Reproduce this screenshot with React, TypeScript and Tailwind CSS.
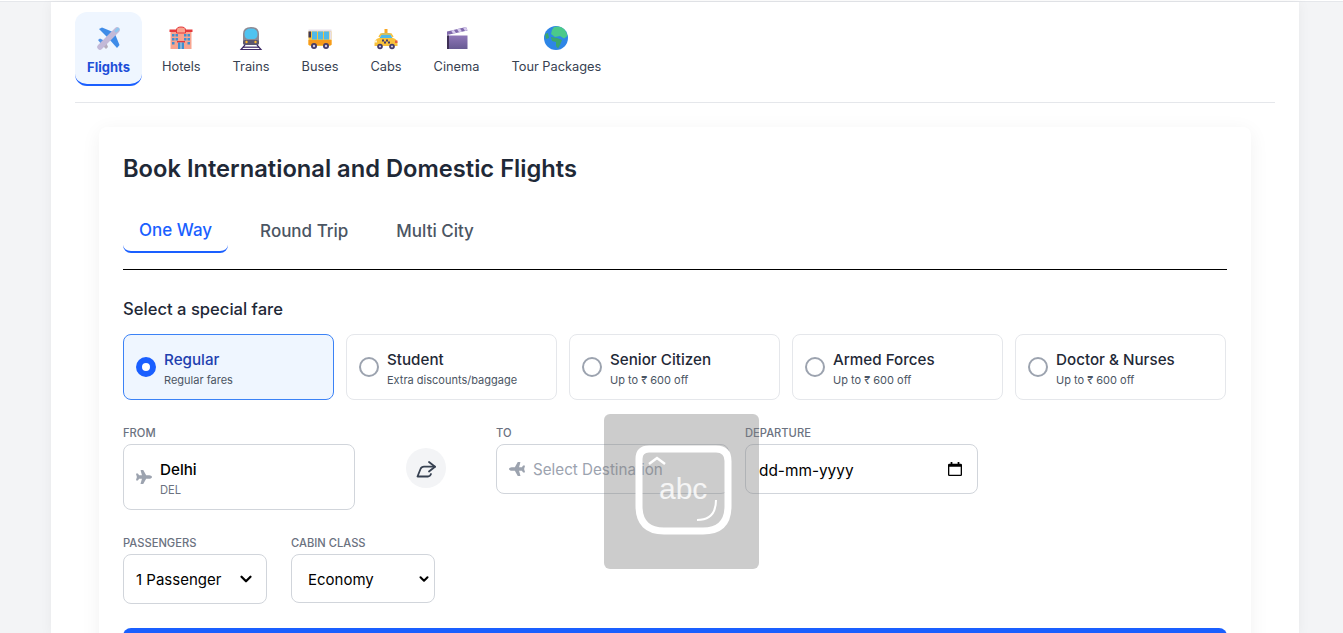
import { useState } from 'react';
import { ChevronDown } from 'lucide-react';
import { FaPlane } from 'react-icons/fa';

function PlaneEmoji() {
  return (
    <svg viewBox="0 0 24 24" className="w-6 h-6">
      <path d="M2 3 L5 1.5 L16 6 L11 12 Z" fill="#3f8ce8" />
      <path d="M18 8 L22.5 19 L20 22 L12 13 Z" fill="#3f8ce8" />
      <path d="M1 14 L3 12.5 L8 15 L5 19 Z" fill="#5092e8" />
      <path d="M5 19 L9 16 L11 21 L9 23 Z" fill="#b4acbc" />
      <path d="M3 21 L20 4" stroke="#c3b9d8" strokeWidth="5.5" strokeLinecap="round" />
      <path d="M19 5 L21 3" stroke="#8fc6ee" strokeWidth="3" strokeLinecap="round" />
    </svg>
  );
}

function HotelEmoji() {
  return (
    <svg viewBox="0 0 24 24" className="w-6 h-6">
      <rect x="1.5" y="5" width="21" height="18" fill="#f8a48f" />
      <rect x="0.5" y="3.5" width="23" height="2.5" fill="#e5383b" />
      <path d="M7.5 4 Q7.5 1 12 1 Q16.5 1 16.5 4 V7 H7.5 Z" fill="#f8a48f" stroke="#e5383b" strokeWidth="1" />
      <rect x="3" y="8" width="2.5" height="2.5" fill="#3f8fd0" />
      <rect x="6.5" y="8" width="2.5" height="2.5" fill="#3f8fd0" />
      <rect x="15" y="8" width="2.5" height="2.5" fill="#3f8fd0" />
      <rect x="18.5" y="8" width="2.5" height="2.5" fill="#3f8fd0" />
      <rect x="3" y="12" width="2.5" height="2.5" fill="#3f8fd0" />
      <rect x="6.5" y="12" width="2.5" height="2.5" fill="#3f8fd0" />
      <rect x="15" y="12" width="2.5" height="2.5" fill="#3f8fd0" />
      <rect x="18.5" y="12" width="2.5" height="2.5" fill="#3f8fd0" />
      <rect x="3" y="16" width="2.5" height="2.5" fill="#3f8fd0" />
      <rect x="18.5" y="16" width="2.5" height="2.5" fill="#3f8fd0" />
      <rect x="8" y="15" width="8" height="1.5" fill="#e5383b" />
      <rect x="9" y="16.5" width="6" height="6.5" fill="#3f8fd0" />
      <rect x="11.6" y="16.5" width="0.8" height="6.5" fill="#f3e9e0" />
    </svg>
  );
}

function TrainEmoji() {
  return (
    <svg viewBox="0 0 24 24" className="w-6 h-6">
      <path d="M4 8 Q4 1 12 1 Q20 1 20 8 V16 Q20 19 17 19 H7 Q4 19 4 16 Z" fill="#8d8a94" />
      <path d="M5.5 8 Q5.5 2.5 12 2.5 Q18.5 2.5 18.5 8 Q18.5 12.5 15 13 H9 Q5.5 12.5 5.5 8 Z" fill="#4fc3f0" />
      <rect x="4" y="14" width="16" height="5" rx="2" fill="#5b5670" />
      <circle cx="7.5" cy="16" r="1.2" fill="#fbb82d" />
      <circle cx="16.5" cy="16" r="1.2" fill="#fbb82d" />
      <path d="M6 19 L2 23.5 H22 L18 19" fill="none" stroke="#3e2a66" strokeWidth="1.2" />
      <path d="M4 21.2 H20" stroke="#3e2a66" strokeWidth="1.2" />
    </svg>
  );
}

function BusEmoji() {
  return (
    <svg viewBox="0 0 24 24" className="w-6 h-6">
      <rect x="0.5" y="4" width="23" height="16" rx="2" fill="#f9c23c" />
      <rect x="0.5" y="14" width="23" height="5" fill="#f79a1c" />
      <rect x="0.5" y="3.5" width="23" height="2" fill="#e5dfec" />
      <rect x="0.5" y="5.5" width="2.5" height="6" fill="#3e3759" />
      <rect x="4" y="5.5" width="5" height="8" fill="#4fb9ea" />
      <rect x="10" y="5.5" width="5" height="8" fill="#4fb9ea" />
      <rect x="16" y="5.5" width="5" height="8" fill="#4fb9ea" />
      <rect x="21.5" y="5.5" width="2" height="8" fill="#e5dfec" />
      <circle cx="6" cy="20" r="3" fill="#433b6b" />
      <circle cx="6" cy="20" r="1.2" fill="#d3c9e0" />
      <circle cx="18" cy="20" r="3" fill="#433b6b" />
      <circle cx="18" cy="20" r="1.2" fill="#d3c9e0" />
    </svg>
  );
}

function TaxiEmoji() {
  return (
    <svg viewBox="0 0 24 24" className="w-6 h-6">
      <rect x="10.5" y="3" width="3" height="4" fill="#f9a825" />
      <path d="M5 14 L7 8.5 Q7.5 7 9 7 H15 Q16.5 7 17 8.5 L19 14 Z" fill="#4fb9ea" />
      <path d="M5 11 L7 8 H17 L19 11" fill="none" stroke="#f9c23c" strokeWidth="1.5" />
      <path d="M0.5 18 Q0.5 13 5 12 H19 Q23.5 13 23.5 18 V20 H0.5 Z" fill="#f9c23c" />
      <rect x="0.5" y="14.5" width="2.5" height="2" fill="#fff3d0" />
      <rect x="21" y="14.5" width="2.5" height="2.5" fill="#e8603c" />
      <path d="M8 13.5 h2 v2 h-2 Z M12 13.5 h2 v2 h-2 Z M10 15.5 h2 v2 h-2 Z M14 15.5 h2 v2 h-2 Z" fill="#433b6b" />
      <circle cx="6" cy="20.5" r="2.8" fill="#433b6b" />
      <circle cx="6" cy="20.5" r="1.1" fill="#d3c9e0" />
      <circle cx="18" cy="20.5" r="2.8" fill="#433b6b" />
      <circle cx="18" cy="20.5" r="1.1" fill="#d3c9e0" />
    </svg>
  );
}

function ClapperEmoji() {
  return (
    <svg viewBox="0 0 24 24" className="w-6 h-6">
      <defs>
        <linearGradient id="clapper-body" x1="0" y1="0" x2="0" y2="1">
          <stop offset="0" stopColor="#8f77b8" />
          <stop offset="1" stopColor="#675a92" />
        </linearGradient>
      </defs>
      <rect x="2" y="9.5" width="20.5" height="13.5" fill="url(#clapper-body)" />
      <rect x="2" y="9.5" width="2" height="13.5" fill="#3e2f55" />
      <path d="M2 5.5 L21 1 L22.5 4.5 L2 9 Z" fill="#7f68ab" />
      <path d="M6 4.6 L9 3.9 L11 7 L8 7.6 Z M12 3.2 L15 2.5 L17 5.6 L14 6.3 Z M18 1.8 L21 1 L22.5 4.3 L20 4.9 Z" fill="#d5c9ec" />
    </svg>
  );
}

function GlobeEmoji() {
  return (
    <svg viewBox="0 0 24 24" className="w-6 h-6">
      <circle cx="12" cy="12" r="12" fill="#2e86e6" />
      <path d="M10 1 Q16 -0.5 20 3 Q23 6 23.5 10 L20 12.5 L16 10 L11 11 L7 8 L8 4 Z" fill="#4bc98a" />
      <path d="M7 11 L13 12 L18 14 L16 19 L14 22.5 L12 20 L12 16 L8 15 Z" fill="#3aa76d" />
      <path d="M1 8 L4 7 L5 12 L2 13 Z" fill="#3aa76d" />
    </svg>
  );
}

const NAV_ITEMS = [
  { label: 'Flights', Icon: PlaneEmoji },
  { label: 'Hotels', Icon: HotelEmoji },
  { label: 'Trains', Icon: TrainEmoji },
  { label: 'Buses', Icon: BusEmoji },
  { label: 'Cabs', Icon: TaxiEmoji },
  { label: 'Cinema', Icon: ClapperEmoji },
  { label: 'Tour Packages', Icon: GlobeEmoji },
];

const FARES = [
  { title: 'Regular', sub: 'Regular fares' },
  { title: 'Student', sub: 'Extra discounts/baggage' },
  { title: 'Senior Citizen', sub: 'Up to ₹ 600 off' },
  { title: 'Armed Forces', sub: 'Up to ₹ 600 off' },
  { title: 'Doctor & Nurses', sub: 'Up to ₹ 600 off' },
];

function FieldLabel({ children }: { children: string }) {
  return <div className="text-[11.2px] font-medium leading-4 text-[#6b7280] uppercase mb-[3px]">{children}</div>;
}

export default function App() {
  const [activeFare, setActiveFare] = useState(0);
  const [tab, setTab] = useState('One Way');

  return (
    <div className="h-[633px] overflow-hidden bg-[#f3f4f6] font-['Inter',sans-serif] relative">
      <div className="h-[2px] bg-white border-b border-[#e5e7eb]" />
      <div className="w-[1248px] ml-[51px] bg-white h-full pt-[10px] px-6 shadow-[0_0_12px_rgba(0,0,0,0.05)]">
        {/* Category nav */}
        <div className="flex items-start gap-2 h-[91px] border-b border-[#e5e7eb]">
          {NAV_ITEMS.map(({ label, Icon }, i) => (
            <button
              key={label}
              className={`h-[74px] flex flex-col items-center px-3 pt-[14px] rounded-xl ${
                i === 0 ? 'w-[67px] bg-[#eff6ff] border-b-2 border-[#1a5fff]' : ''
              }`}
            >
              <Icon />
              <span
                className={`leading-5 mt-[7px] whitespace-nowrap ${
                  i === 0 ? 'text-[13px] font-bold text-[#1d4ed8]' : 'text-[12.8px] text-[#374151]'
                }`}
              >
                {label}
              </span>
            </button>
          ))}
        </div>

        {/* Booking card */}
        <div className="mx-6 mt-6 bg-white rounded-lg shadow-[0_4px_20px_rgba(0,0,0,0.06)] p-6 h-[600px]">
          <h1 className="text-[23.7px] leading-8 font-semibold text-[#1f2937] mt-[2px]">
            Book International and Domestic Flights
          </h1>

          <div className="flex gap-4 mt-[20px] border-b border-black h-[65px]">
            {['One Way', 'Round Trip', 'Multi City'].map((t) => (
              <button
                key={t}
                onClick={() => setTab(t)}
                className={`px-4 pt-[6px] h-[48px] text-[17px] font-medium rounded-lg ${
                  tab === t ? 'text-[#1a5fff] border-b-2 border-[#1a5fff]' : 'text-[#4b5563]'
                }`}
              >
                {t}
              </button>
            ))}
          </div>

          <h2 className="text-[16.6px] leading-7 font-medium text-[#1f2937] mt-[25px]">Select a special fare</h2>

          <div className="flex gap-3 mt-[11px]">
            {FARES.map((fare, i) => (
              <button
                key={fare.title}
                onClick={() => setActiveFare(i)}
                className={`w-[211px] h-[66px] flex items-center gap-2 px-3 text-left rounded-lg border ${
                  activeFare === i ? 'bg-[#eff6ff] border-[#3b82f6]' : 'bg-white border-[#e5e7eb]'
                }`}
              >
                <span
                  className={`w-5 h-5 rounded-full shrink-0 bg-white ${
                    activeFare === i ? 'border-[6px] border-[#1a5fff]' : 'border-2 border-[#9ca3af]'
                  }`}
                />
                <span className="block">
                  <span className={`block pt-[2px] text-[15.2px] leading-6 font-medium ${activeFare === i ? 'text-[#1e40af]' : 'text-[#1f2937]'}`}>
                    {fare.title}
                  </span>
                  <span className="block text-[11px] leading-4 text-[#4b5563]">{fare.sub}</span>
                </span>
              </button>
            ))}
          </div>

          {/* Route fields */}
          <div className="flex items-start mt-[25px]">
            <div className="w-[232px]">
              <FieldLabel>From</FieldLabel>
              <div className="h-[66px] rounded-lg border border-[#d1d5db] flex items-center pl-3 gap-[8px]">
                <FaPlane className="w-4 h-4 text-[#9ca3af]" />
                <div>
                  <div className="pt-[2px] text-[15.2px] leading-6 font-medium text-black">Delhi</div>
                  <div className="text-[11.2px] leading-4 text-[#6b7280]">DEL</div>
                </div>
              </div>
            </div>
            <div className="w-[141px] flex justify-center pt-[23px]">
              <button className="w-10 h-10 rounded-full bg-[#f3f4f6] flex items-center justify-center">
                <svg viewBox="0 0 24 24" className="w-6 h-6 stroke-[#374151] fill-none" strokeWidth="1.8" strokeLinecap="round" strokeLinejoin="round">
                  <path d="M15 6 L21 10.7 L15 15.5" />
                  <path d="M21 10.7 H10 Q7.5 10.7 6.5 13 L3.5 20.5 H14 Q16 20.5 17 18" />
                </svg>
              </button>
            </div>
            <div className="w-[233px] mr-4">
              <FieldLabel>To</FieldLabel>
              <div className="h-[50px] rounded-lg border border-[#d1d5db] flex items-center pl-3 gap-[8px]">
                <FaPlane className="w-4 h-4 text-[#9ca3af] rotate-180" />
                <span className="pt-[2px] text-[15.2px] text-[#9ca3af]">Select Destination</span>
              </div>
            </div>
            <div className="w-[233px]">
              <FieldLabel>Departure</FieldLabel>
              <div className="h-[50px] rounded-lg border border-[#d1d5db] flex items-center justify-between pl-[13px] pr-[15px]">
                <span className="pt-[3px] text-[15.4px] text-black">dd-mm-yyyy</span>
                <svg viewBox="0 0 16 16" className="w-[14px] h-[14px] fill-black">
                  <path d="M3 0h2v2h6V0h2v2h1.5A1.5 1.5 0 0 1 16 3.5v11a1.5 1.5 0 0 1-1.5 1.5h-13A1.5 1.5 0 0 1 0 14.5v-11A1.5 1.5 0 0 1 1.5 2H3V0Zm-1.5 5.5v9h13v-9h-13Z" />
                </svg>
              </div>
            </div>
          </div>

          {/* Passengers and cabin */}
          <div className="flex gap-6 mt-[25px]">
            <div className="w-36">
              <FieldLabel>Passengers</FieldLabel>
              <div className="h-[50px] rounded-lg border border-[#d1d5db] flex items-center justify-between pl-3 pr-[11px] text-[15px] text-black">
                <span className="pt-[2px]">1 Passenger</span>
                <ChevronDown className="w-[18px] h-[18px]" strokeWidth={3} />
              </div>
            </div>
            <div className="w-36">
              <FieldLabel>Cabin Class</FieldLabel>
              <div className="h-[49px] rounded-lg border border-[#d1d5db] flex items-center justify-between pl-4 pr-[3px] text-[15px] text-black">
                <span className="pt-[3px]">Economy</span>
                <ChevronDown className="w-[14px] h-[14px]" strokeWidth={3.5} />
              </div>
            </div>
          </div>

          <div className="mt-[24px] h-12 rounded-lg bg-[#1a5fff]" />
        </div>
      </div>

      {/* Handwriting input overlay */}
      <div className="absolute left-[604px] top-[414px] w-[155px] h-[155px] rounded-md bg-[#808080]/40">
        <svg viewBox="0 0 155 155" className="w-[155px] h-[155px]">
          <path
            d="M45 35 H112 Q124 35 124 47 V92 Q124 117 99 117 H60 Q35 117 35 92 V45 Q35 35 45 35 Z"
            fill="none"
            stroke="#fff"
            strokeWidth="7"
          />
          <path d="M45 50 L53 44 L61 50" fill="none" stroke="#fff" strokeWidth="2.5" />
          <path d="M93 106 Q112 106 112 86" fill="none" stroke="#fff" strokeWidth="2" />
        </svg>
        <span className="absolute left-[55px] top-[57px] text-[30px] leading-9 text-white/80 font-['Liberation_Sans',sans-serif]">abc</span>
      </div>
    </div>
  );
}
